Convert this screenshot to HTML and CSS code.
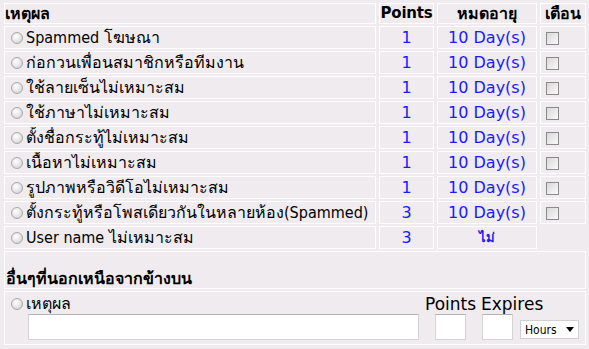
FILE: index.html
```html
<!DOCTYPE html>
<html lang="th">
<head>
  <meta charset="UTF-8" />
  <title>รายงาน</title>
  <link rel="stylesheet" href="styles.css">
</head>
<body>
  <form id="warnForm">
    <table class="report">
      <tr class="head">
        <td class="c-reason">เหตุผล</td>
        <td class="c-points">Points</td>
        <td class="c-expire">หมดอายุ</td>
        <td class="c-warn">เตือน</td>
      </tr>
      <tr>
        <td class="reason"><label><input type="radio" name="reason" value="1">Spammed โฆษณา</label></td>
        <td class="num">1</td>
        <td class="num">10 Day(s)</td>
        <td><input type="checkbox" name="warn1"></td>
      </tr>
      <tr>
        <td class="reason"><label><input type="radio" name="reason" value="2">ก่อกวนเพื่อนสมาชิกหรือทีมงาน</label></td>
        <td class="num">1</td>
        <td class="num">10 Day(s)</td>
        <td><input type="checkbox" name="warn2"></td>
      </tr>
      <tr>
        <td class="reason"><label><input type="radio" name="reason" value="3">ใช้ลายเซ็นไม่เหมาะสม</label></td>
        <td class="num">1</td>
        <td class="num">10 Day(s)</td>
        <td><input type="checkbox" name="warn3"></td>
      </tr>
      <tr>
        <td class="reason"><label><input type="radio" name="reason" value="4">ใช้ภาษาไม่เหมาะสม</label></td>
        <td class="num">1</td>
        <td class="num">10 Day(s)</td>
        <td><input type="checkbox" name="warn4"></td>
      </tr>
      <tr>
        <td class="reason"><label><input type="radio" name="reason" value="5">ตั้งชื่อกระทู้ไม่เหมาะสม</label></td>
        <td class="num">1</td>
        <td class="num">10 Day(s)</td>
        <td><input type="checkbox" name="warn5"></td>
      </tr>
      <tr>
        <td class="reason"><label><input type="radio" name="reason" value="6">เนื้อหาไม่เหมาะสม</label></td>
        <td class="num">1</td>
        <td class="num">10 Day(s)</td>
        <td><input type="checkbox" name="warn6"></td>
      </tr>
      <tr>
        <td class="reason"><label><input type="radio" name="reason" value="7">รูปภาพหรือวิดีโอไม่เหมาะสม</label></td>
        <td class="num">1</td>
        <td class="num">10 Day(s)</td>
        <td><input type="checkbox" name="warn7"></td>
      </tr>
      <tr>
        <td class="reason"><label><input type="radio" name="reason" value="8">ตั้งกระทู้หรือโพสเดียวกันในหลายห้อง(Spammed)</label></td>
        <td class="num">3</td>
        <td class="num">10 Day(s)</td>
        <td><input type="checkbox" name="warn8"></td>
      </tr>
      <tr>
        <td class="reason"><label><input type="radio" name="reason" value="9">User name ไม่เหมาะสม</label></td>
        <td class="num">3</td>
        <td class="num never">ไม่</td>
      </tr>
      <tr>
        <td colspan="4" class="other-title">อื่นๆที่นอกเหนือจากข้างบน</td>
      </tr>
      <tr>
        <td colspan="4" class="other">
          <div class="custom">
            <label class="custom-reason"><input type="radio" name="reason" value="0">เหตุผล</label>
            <span class="custom-label">Points</span>
            <span class="custom-label">Expires</span>
            <span></span>
            <input type="text" class="txt-reason" name="custom_reason">
            <input type="text" class="txt-small txt-points" name="custom_points">
            <input type="text" class="txt-small txt-expires" name="custom_expires">
            <span class="unit">
              <select name="custom_unit">
                <option>Hours</option>
                <option>Days</option>
              </select>
            </span>
          </div>
        </td>
      </tr>
    </table>
  </form>
</body>
</html>
```

FILE: styles.css
```css
body {
  margin: 0;
  background: #efebef;
  font-family: "DejaVu Sans", Tahoma, sans-serif;
  font-size: 16px;
  color: #000;
}

form {
  margin: 0;
}

.report {
  width: 589px;
  box-sizing: border-box;
  table-layout: fixed;
  background: #efebef;
  border-spacing: 3px 2px;
  padding: 1px 0 0 1px;
}

.report > tbody > tr > td {
  border: 1px solid #fff;
  padding: 0 1px;
  height: 21px;
  line-height: 19px;
  white-space: nowrap;
  overflow: hidden;
}

.head td {
  font-weight: bold;
  text-align: center;
}

.report > tbody > .head > td {
  height: 18px;
  padding: 0;
}

.head .c-points {
  font-size: 15px;
  letter-spacing: -0.2px;
}

.head .c-reason {
  text-align: left;
  padding-left: 1px;
}

.c-points {
  width: 53px;
}

.c-expire {
  width: 98px;
}

.c-warn {
  width: 44px;
}

.reason {
  font-family: "DejaVu Sans Condensed", "DejaVu Sans", Tahoma, sans-serif;
}

.num {
  text-align: center;
  color: #1a1aff;
}

.never {
  font-size: 13px;
  font-weight: bold;
}

label {
  cursor: pointer;
}

input[type="radio"] {
  appearance: none;
  width: 12px;
  height: 12px;
  margin: 0 3px 0 5px;
  vertical-align: -1px;
  border: 1px solid #a8a8a8;
  border-radius: 50%;
  background: radial-gradient(circle at 40% 35%, #fff 0, #e4e4e4 55%, #c8c8c8 100%);
}

input[type="checkbox"] {
  appearance: none;
  width: 13px;
  height: 13px;
  margin: 0 3px 0 4px;
  vertical-align: -2px;
  border: 1px solid #8a8a8a;
  background: linear-gradient(135deg, #d8d8d8, #fafafa);
}

.report > tbody > tr > .other-title {
  height: 36px;
  vertical-align: bottom;
  padding: 0 0 0 1px;
  font-weight: bold;
}

.report > tbody > tr > .other {
  height: 52px;
  padding: 0;
  vertical-align: top;
}

.custom {
  display: grid;
  grid-template-columns: 420px 56px 39px 1fr;
  grid-template-rows: 22px 26px;
  align-items: end;
}

.custom-reason {
  align-self: center;
  padding-left: 1px;
}

.custom-label {
  font-size: 17px;
  white-space: nowrap;
}

.txt-reason,
.txt-small {
  box-sizing: border-box;
  height: 26px;
  padding: 0;
  border: 1px solid #d4d4d4;
  border-top-color: #b4b4b4;
  background: #fff;
}

.txt-reason {
  width: 391px;
  margin-left: 23px;
}

.txt-small {
  width: 31px;
}

.txt-points {
  margin-left: 10px;
}

.txt-expires {
  margin-left: 1px;
}

.unit {
  position: relative;
  display: block;
  width: 59px;
  height: 19px;
  margin-bottom: 1px;
}

.unit::after {
  content: "";
  position: absolute;
  right: 5px;
  top: 7px;
  border-left: 4px solid transparent;
  border-right: 4px solid transparent;
  border-top: 5px solid #000;
  pointer-events: none;
}

select {
  appearance: none;
  box-sizing: border-box;
  display: block;
  width: 59px;
  height: 19px;
  margin: 0;
  padding: 0 0 0 4px;
  font-family: "DejaVu Sans Condensed", "DejaVu Sans", sans-serif;
  font-size: 12px;
  color: #000;
  border: 1px solid #d0d0d0;
  border-radius: 0;
  background: #fff;
}
```
